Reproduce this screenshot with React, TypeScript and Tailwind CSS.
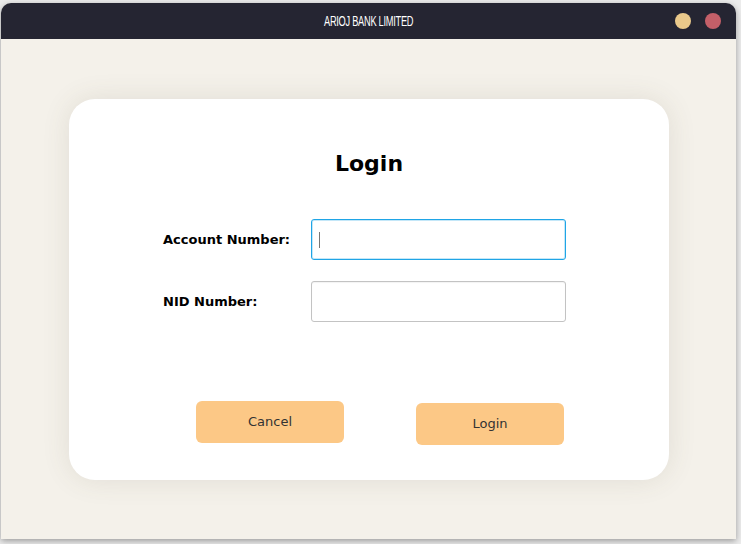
export default function App() {
  return (
    <div className="w-[741px] h-[544px] bg-[#ececec] pt-[3px] pl-[1px] overflow-hidden font-['DejaVu_Sans',sans-serif]">
      {/* Window */}
      <div className="w-[735px] h-[536px] rounded-t-[10px] overflow-hidden flex flex-col shadow-[0_2px_6px_rgba(0,0,0,0.35)]">
        {/* Title bar */}
        <div className="h-[36px] bg-[#252532] relative flex items-center justify-center">
          <span className="inline-block text-white text-[14px] tracking-[-0.4px] scale-x-[0.66] font-['Liberation_Sans',sans-serif]">
            ARIOJ BANK LIMITED
          </span>
          <div className="absolute right-[15px] top-[10px] flex gap-[14px]">
            <span className="w-[16px] h-[16px] rounded-full bg-[#eac98b]" />
            <span className="w-[16px] h-[16px] rounded-full bg-[#c45f68]" />
          </div>
        </div>

        {/* Content */}
        <div className="flex-1 bg-[#f4f1ea] pl-[68px] pt-[60px]">
          <div className="w-[600px] h-[381px] bg-white rounded-[26px] shadow-[0_0_28px_rgba(90,80,60,0.12)] pt-[52px] flex flex-col">
            <h1 className="text-center text-[22px] leading-[26px] font-bold text-black">Login</h1>

            <div className="mt-[42px] pl-[94px] flex flex-col gap-[21px]">
              <div className="flex items-center">
                <label className="w-[148px] text-[13px] font-bold text-black">Account Number:</label>
                <div className="w-[255px] h-[41px] rounded-[3px] border border-[#1fa5e6] shadow-[inset_0_0_0_1px_rgba(61,174,233,0.3)] flex items-center pl-[7px]">
                  <span className="w-[1px] h-[16px] bg-[#777]" />
                </div>
              </div>
              <div className="flex items-center">
                <label className="w-[148px] text-[13px] font-bold text-black">NID Number:</label>
                <div className="w-[255px] h-[41px] rounded-[3px] border border-[#c3c3c3] shadow-[inset_0_1px_1px_rgba(0,0,0,0.05)]" />
              </div>
            </div>

            <div className="mt-[79px] pl-[127px] flex items-start gap-[72px]">
              <button className="w-[148px] h-[42px] rounded-[6px] bg-[#fcc886] text-[13px] text-[#333]">Cancel</button>
              <button className="mt-[2px] w-[148px] h-[42px] rounded-[6px] bg-[#fcc886] text-[13px] text-[#333]">Login</button>
            </div>
          </div>
        </div>
      </div>
    </div>
  );
}
